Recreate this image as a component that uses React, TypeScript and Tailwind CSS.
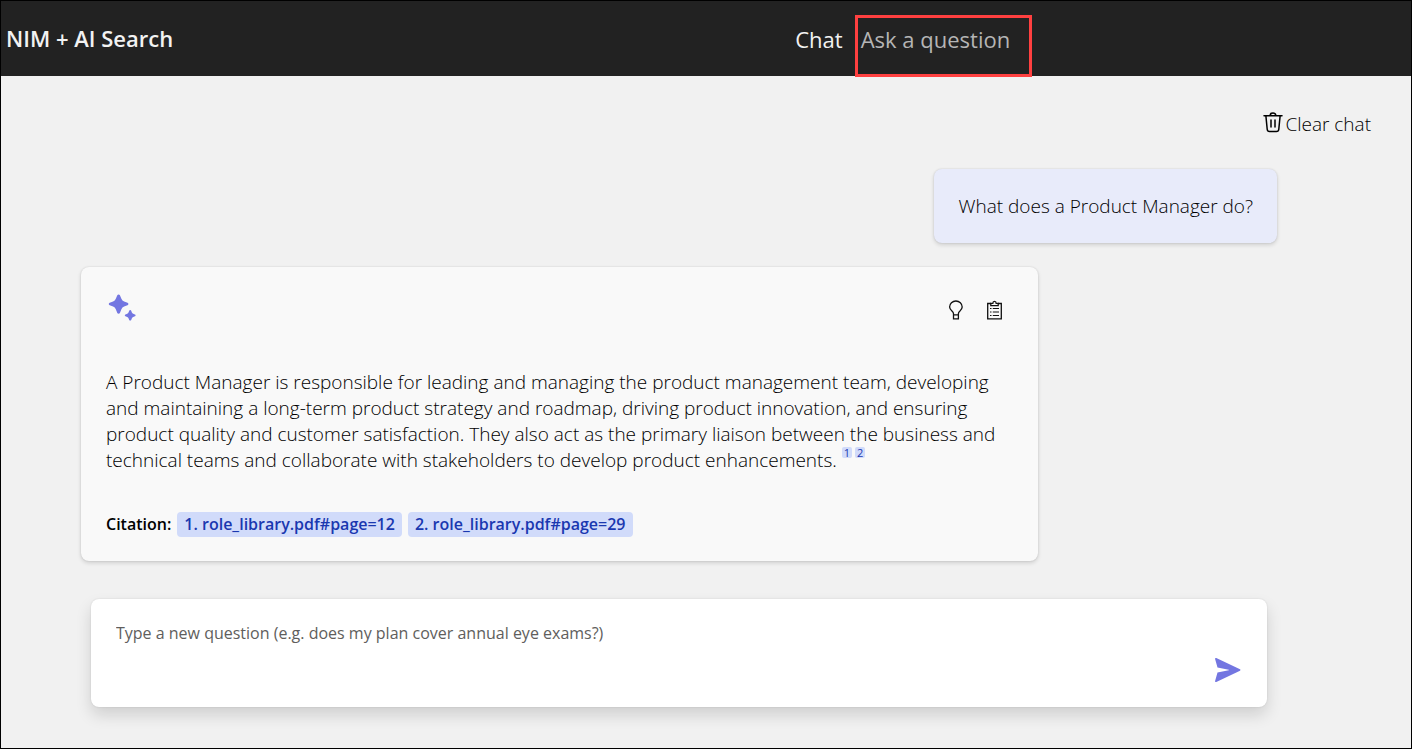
import { useState } from "react";

const citations = ["role_library.pdf#page=12", "role_library.pdf#page=29"];

function TrashIcon() {
  return (
    <svg className="mb-1 h-6 w-5" viewBox="0 0 20 24" fill="none" stroke="#000" strokeWidth="1.5" strokeLinecap="round" strokeLinejoin="round" aria-hidden="true">
      <path d="M1 5.800h18M7.200 5.500c0-3.400 5.600-3.400 5.600 0M2.900 6l1.300 13.200c.1 1.500 1 2.200 2.400 2.200h6.800c1.400 0 2.300-.7 2.400-2.200L17.100 6M8 10v7M12 10v7" />
    </svg>
  );
}

function SparkleIcon() {
  return (
    <svg className="h-7 w-7" viewBox="0 0 28 28" fill="#7376e1" aria-hidden="true">
      <path d="M9.300 1.300c.4-1.100 2.200-1.100 2.600 0l1.500 3.500a5 5 0 0 0 2.700 2.700l3.400 1.300c1.200.4 1.200 2 0 2.400l-3.400 1.400a5 5 0 0 0-2.700 2.700l-1.500 3.600c-.4 1.100-2.200 1.100-2.600 0l-1.500-3.600a5 5 0 0 0-2.700-2.700L1.700 11.200c-1.200-.4-1.200-2 0-2.400l3.400-1.300a5 5 0 0 0 2.700-2.700z" />
      <path d="M21.200 16.800c.3-1 1.700-1 2 0l.7 1.600c.2.600.7 1.100 1.300 1.300l1.700.7c.9.300.9 1.500 0 1.800l-1.700.7c-.6.200-1.100.7-1.300 1.300l-.7 1.700c-.3.900-1.700.9-2 0l-.7-1.700c-.2-.6-.7-1.100-1.300-1.300l-1.700-.7c-.9-.3-.9-1.500 0-1.800l1.700-.7c.6-.2 1.100-.7 1.300-1.300z" />
    </svg>
  );
}

function BulbIcon() {
  return (
    <svg className="h-5 w-5" viewBox="0 0 20 20" fill="none" stroke="#111" strokeWidth="1.300" aria-hidden="true">
      <path d="M7.500 15v-1.200c0-1-.5-1.700-1.300-2.500C4.700 9.900 3.600 8.900 3.600 7.100a6.300 6.100 0 0 1 12.600 0c0 1.800-1.100 2.800-2.500 4.200-.8.800-1.300 1.500-1.300 2.500V15M7.500 14.900h4.900v3.900h-4.900z" />
    </svg>
  );
}

function ClipboardIcon() {
  return (
    <svg className="h-5 w-5" viewBox="0 0 20 20" fill="none" stroke="#111" strokeWidth="1.300" aria-hidden="true">
      <path d="M6 3.500H2.700v15.300h13.600V3.500H13" />
      <path d="M5.800 5.600V3.400h2c.1-2.700 3.300-2.700 3.400 0h2v2.200z" />
      <path d="M5 8.500h1.500M7.800 8.500H14M5 12h1.500M7.800 12H14M5 15.500h1.500M7.800 15.500H14" strokeWidth="1.200" />
    </svg>
  );
}

function SendIcon() {
  return (
    <svg className="h-7 w-7" viewBox="0 0 28 28" fill="#7376e1" aria-hidden="true">
      <path d="M2.300 2.100c-.7-.3-1.400.3-1.200 1l2.400 8.500 11.200 2.100c.4.100.4.500 0 .6L3.500 16.400l-2.400 8.500c-.2.800.5 1.400 1.200 1L26 14.700c.6-.3.600-1.100 0-1.400z" />
    </svg>
  );
}

export default function App() {
  const [question, setQuestion] = useState("");

  return (
    <div className="flex min-h-screen flex-col border border-black bg-[#f1f1f1] font-['Open_Sans','Noto_Sans',sans-serif] text-black">
      <header className="flex h-[75px] items-start justify-between bg-[#222] pl-[5px] text-[#f2f2f2]">
        <h1 className="pt-[23px] text-[22px] leading-7 font-semibold">NIM + AI Search</h1>
        <nav className="mr-[27%] flex gap-3 self-stretch pt-[14px] text-[22px] leading-7">
          <a href="#chat" className="pt-2.5">Chat</a>
          <a href="#ask" className="-mb-px w-[177px] border-[3px] border-[#ff4040] pt-[7px] pl-[3px] whitespace-nowrap text-[#b5b5b5]">
            Ask a question
          </a>
        </nav>
      </header>

      <main className="flex flex-1 flex-col pb-10">
        <div className="flex justify-end pt-8 pr-10">
          <button type="button" className="flex items-center gap-0.5 text-[19px] leading-8 font-light">
            <TrashIcon />
            Clear chat
          </button>
        </div>

        <div className="flex flex-col pt-[29px] pr-[54px]">
          <div className="mx-auto flex w-full max-w-[1196px] flex-col gap-6">
            <div className="self-end rounded-lg bg-[#e8ebfa] px-6 py-6 text-[19px] leading-[26px] font-light shadow-[0_2px_4px_rgba(0,0,0,0.14),0_0_2px_rgba(0,0,0,0.12)]">
              What does a Product Manager do?
            </div>

            <article className="w-4/5 rounded-lg bg-[#f9f9f9] p-6 pl-[25px] shadow-[0_2px_4px_rgba(0,0,0,0.14),0_0_2px_rgba(0,0,0,0.12)]">
              <div className="flex items-start justify-between pr-[9px]">
                <div className="pt-[3px] pl-0.5">
                  <SparkleIcon />
                </div>
                <div className="flex gap-[19px] pt-[9px]">
                  <button type="button" aria-label="Show thought process">
                    <BulbIcon />
                  </button>
                  <button type="button" aria-label="Show supporting content">
                    <ClipboardIcon />
                  </button>
                </div>
              </div>

              <p className="mt-[47px] text-[19px] leading-[26px] font-light">
                A Product Manager is responsible for leading and managing the product management team, developing and maintaining a long-term product strategy and roadmap, driving product innovation, and ensuring product quality and customer satisfaction. They also act as the primary liaison between the business and technical teams and collaborate with stakeholders to develop product enhancements.{" "}
                {citations.map((file, i) => (
                  <sup key={file} className="-top-2.5 mr-[3px] inline-block rounded-xs bg-[#d1dbfa] px-0.5 text-[11px] leading-[11px] font-normal text-[#1a38b0]">
                    <a href={"#" + file} className="block">{i + 1}</a>
                  </sup>
                ))}
              </p>

              <div className="mt-[39px] flex flex-wrap items-center gap-1.5 text-[16px] leading-[25px] font-semibold">
                <span>Citation:</span>
                {citations.map((file, i) => (
                  <a key={file} href={"#" + file} className="rounded-sm bg-[#d1dbfa] px-[7px] text-[#1a38b0]">
                    {i + 1}. {file}
                  </a>
                ))}
              </div>
            </article>
          </div>
        </div>

        <div className="mt-[38px] pr-[54px]">
          <form
            onSubmit={(e) => e.preventDefault()}
            className="mx-auto flex h-[108px] w-full max-w-[1176px] rounded-lg bg-white pt-[22px] pr-[25px] pb-[23px] pl-[25px] shadow-[0_8px_16px_rgba(0,0,0,0.14),0_0_2px_rgba(0,0,0,0.12)]"
          >
            <textarea
              aria-label="Question"
              value={question}
              onChange={(e) => setQuestion(e.target.value)}
              placeholder="Type a new question (e.g. does my plan cover annual eye exams?)"
              className="flex-1 resize-none text-[16px] leading-6 outline-none placeholder:text-[#605e5c]"
            />
            <button type="submit" aria-label="Ask question" className="self-end">
              <SendIcon />
            </button>
          </form>
        </div>
      </main>
    </div>
  );
}
